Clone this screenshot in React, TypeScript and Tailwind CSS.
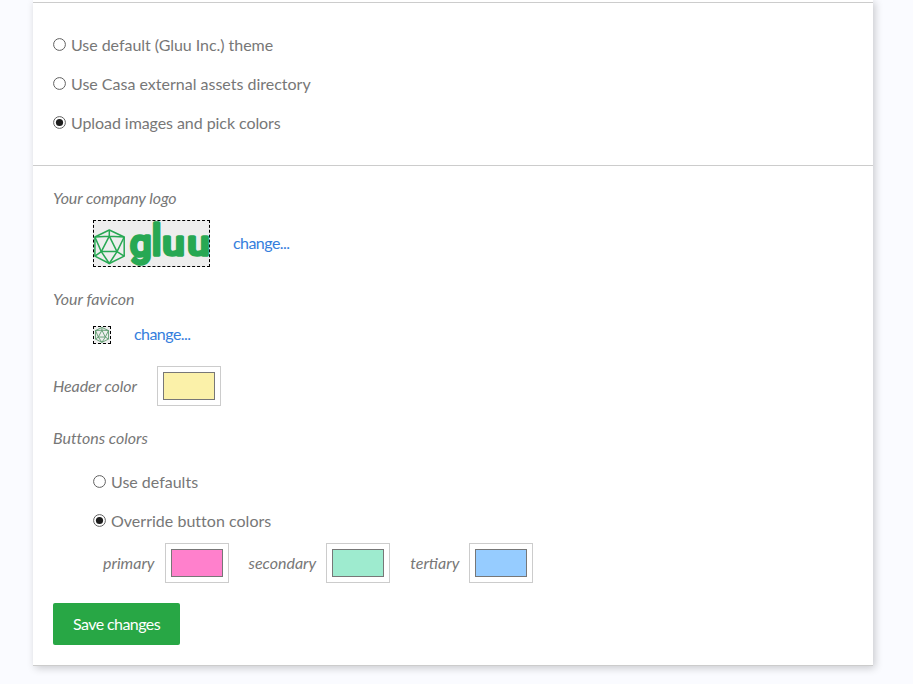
import React from 'react';

function Radio({ label, checked = false, spacing = '' }: { label: string; checked?: boolean; spacing?: string }) {
  return (
    <label className="flex h-[39px] items-center">
      <svg className="-mt-0.5 mr-[5px] h-[13px] w-[13px] shrink-0" viewBox="0 0 13 13">
        <circle cx="6.5" cy="6.5" r="5.9" fill="#fff" stroke="#606060" strokeWidth="1" />
        {checked && <circle cx="6.5" cy="6.5" r="3.6" fill="#1c1c1c" />}
      </svg>
      <span className={`-mt-0.5 ${spacing}`}>{label}</span>
    </label>
  );
}

function Swatch({ color }: { color: string }) {
  return (
    <div className="h-10 w-16 shrink-0 border border-[#ccc] bg-white p-[5px]">
      <div className={`h-7 w-[52px] border border-[#777] ${color}`} />
    </div>
  );
}

function Polyhedron({ width, color }: { width: number; color: string }) {
  return (
    <g fill="none" stroke={color} strokeWidth={width} strokeLinejoin="round">
      <path d="M15.300 1 30.200 8V27.200L15.300 34.500 .9 27.200V8Z" />
      <path d="M15.300 7.200 23 22.600H7.300Z" />
      <path d="M15.300 1V7.200M.9 8 15.300 7.200 30.200 8M.9 8 7.300 22.600 .9 27.200M30.200 8 23 22.600 30.200 27.200M7.300 22.600 15.300 34.500 23 22.600" />
    </g>
  );
}

function Logo() {
  return (
    <div className="h-[47px] w-[117px] border border-dashed border-black bg-[#eee]">
      <svg className="block h-[45px] w-[115px] overflow-visible" viewBox="0 0 115 45">
        <g transform="translate(0 8)">
          <Polyhedron width={1.5} color="#27a853" />
        </g>
        <g
          className="font-['Roboto']"
          fill="#27a853"
          stroke="#27a853"
          strokeWidth="3.6"
          strokeLinejoin="round"
        >
          <text>
            <tspan x="36" y="34.500" fontSize="36" textLength="21.500" lengthAdjust="spacingAndGlyphs">g</tspan>
            <tspan x="57.400" y="33.500" fontSize="42">l</tspan>
            <tspan x="68.600" y="33.500" fontSize="33" textLength="22" lengthAdjust="spacingAndGlyphs">u</tspan>
            <tspan x="93.500" y="33.500" fontSize="33" textLength="22" lengthAdjust="spacingAndGlyphs">u</tspan>
          </text>
        </g>
      </svg>
    </div>
  );
}

export default function App() {
  return (
    <div className="h-[684px] overflow-hidden bg-[#fafbff] pl-[33px] font-['Lato',sans-serif] text-base leading-6 text-[#777]">
      <main className="h-[666px] w-[840px] border-b border-[#ccc] bg-white shadow-[2px_2px_8px_0_rgba(0,0,0,0.2)]">
        <div className="h-[3px] border-b border-[#ccc]" />
        <section className="h-[163px] border-b border-[#ccc] px-5 pt-[23px]">
          <Radio label="Use default (Gluu Inc.) theme" spacing="tracking-[-0.04px]" />
          <Radio label="Use Casa external assets directory" />
          <Radio label="Upload images and pick colors" checked spacing="tracking-[-0.07px]" />
        </section>
        <section className="px-5 pt-[19px]">
          <div className="h-[35px] italic leading-[26px] tracking-[-0.09px]">Your company logo</div>
          <div className="flex items-center gap-[23px] pl-10">
            <Logo />
            <a className="-mt-0.5 tracking-[-0.55px] text-[#357edd]">change...</a>
          </div>
          <div className="mt-[19px] h-9 italic leading-[26px]">Your favicon</div>
          <div className="flex h-[26px] items-center gap-[23px] pl-10">
            <div className="h-[18px] w-[18px] border border-dashed border-black bg-[#eee]">
              <svg className="block h-4 w-4" viewBox="0 0 31 36">
                <Polyhedron width={2} color="#5b9a6c" />
              </svg>
            </div>
            <a className="-mt-0.5 tracking-[-0.55px] text-[#357edd]">change...</a>
          </div>
          <div className="mt-[18px] flex h-10 items-center gap-5 italic">
            <span className="w-[84px] whitespace-nowrap tracking-[-0.08px]">Header color</span>
            <Swatch color="bg-[#fbf1a9]" />
          </div>
          <div className="mt-[19px] h-[38px] italic leading-[26px] tracking-[-0.03px]">Buttons colors</div>
          <div className="pl-10">
            <Radio label="Use defaults" />
            <Radio label="Override button colors" checked spacing="tracking-[0.02px]" />
          </div>
          <div className="mt-[2px] flex items-center pl-[50px] italic">
            <span className="mr-2.5">primary</span>
            <Swatch color="bg-[#ff80cc]" />
            <span className="ml-5 mr-2.5">secondary</span>
            <Swatch color="bg-[#9eebcf]" />
            <span className="ml-5 mr-2.5">tertiary</span>
            <Swatch color="bg-[#96ccff]" />
          </div>
          <button className="mt-5 h-[42px] w-[127px] rounded-[2px] bg-[#28a745] tracking-[-0.58px] text-white">Save changes</button>
        </section>
      </main>
    </div>
  );
}
